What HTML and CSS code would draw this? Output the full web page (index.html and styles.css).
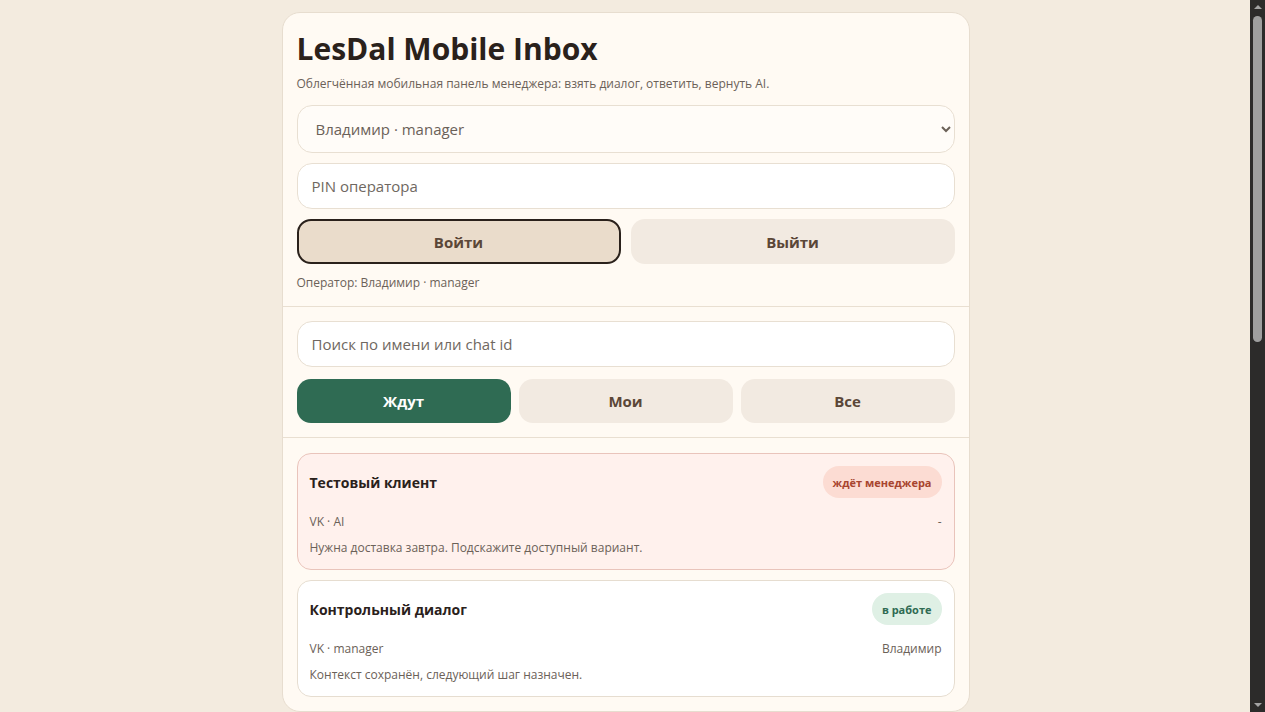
FILE: index.html
```html
<!DOCTYPE html>
<html lang="ru">
<head>
<meta charset="utf-8">
<title>LesDal Mobile Inbox</title>
<link rel="stylesheet" href="styles.css">
</head>
<body>
<main class="app">
  <section class="panel">
    <div class="section">
      <h1 class="title">LesDal Mobile Inbox</h1>
      <p class="subtitle">Облегчённая мобильная панель менеджера: взять диалог, ответить, вернуть AI.</p>
      <select class="field select">
        <option>Владимир · manager</option>
      </select>
      <input class="field" type="password" placeholder="PIN оператора">
      <div class="row2">
        <button class="btn btn-login">Войти</button>
        <button class="btn">Выйти</button>
      </div>
      <p class="hint">Оператор: Владимир · manager</p>
    </div>
    <div class="section">
      <input class="field" type="text" placeholder="Поиск по имени или chat id">
      <div class="row3">
        <button class="btn btn-active">Ждут</button>
        <button class="btn">Мои</button>
        <button class="btn">Все</button>
      </div>
    </div>
    <div class="section list">
      <article class="chat chat-wait">
        <div class="chat-head">
          <span class="chat-name">Тестовый клиент</span>
          <span class="badge badge-wait">ждёт менеджера</span>
        </div>
        <div class="chat-meta"><span>VK · AI</span><span>-</span></div>
        <div class="chat-text">Нужна доставка завтра. Подскажите доступный вариант.</div>
      </article>
      <article class="chat">
        <div class="chat-head">
          <span class="chat-name">Контрольный диалог</span>
          <span class="badge badge-work">в работе</span>
        </div>
        <div class="chat-meta"><span>VK · manager</span><span>Владимир</span></div>
        <div class="chat-text">Контекст сохранён, следующий шаг назначен.</div>
      </article>
    </div>
  </section>
  <section class="panel panel-dialog">
    <div class="section">
      <p class="hint">Выберите диалог из списка.</p>
    </div>
  </section>
</main>
<div class="scrollbar" aria-hidden="true">
  <span class="sb-arrow sb-up"></span>
  <span class="sb-track"><span class="sb-thumb"></span></span>
  <span class="sb-arrow sb-down"></span>
</div>
</body>
</html>
```
FILE: styles.css
```css
html {
  color-scheme: dark;
}

body {
  margin: 0;
  padding-right: 14px;
  background: #f3ebdf;
  color: #2a211b;
  font-family: "Open Sans", "Noto Sans", sans-serif;
}

/* imitation of the browser's vertical scrollbar */
.scrollbar {
  position: fixed;
  top: 0;
  right: 0;
  width: 15px;
  height: 100vh;
  background: #2c2b2a;
  display: flex;
  flex-direction: column;
  align-items: center;
}

.sb-arrow {
  width: 0;
  height: 0;
  flex: 0 0 auto;
}

.sb-up {
  margin-top: 5px;
  border-left: 4px solid transparent;
  border-right: 4px solid transparent;
  border-bottom: 4px solid #a3a3a3;
}

.sb-down {
  margin-bottom: 5px;
  border-left: 4px solid transparent;
  border-right: 4px solid transparent;
  border-top: 4px solid #a3a3a3;
}

.sb-track {
  flex: 1;
  width: 100%;
  display: flex;
  justify-content: center;
  padding-top: 7px;
}

.sb-thumb {
  width: 9px;
  height: 326px;
  border-radius: 5px;
  background: #9f9f9f;
}

.app {
  width: 688px;
  margin: 12px auto;
  display: flex;
  flex-direction: column;
  gap: 12px;
}

.panel {
  background: #fffaf3;
  border: 1px solid #e7ddcf;
  border-radius: 18px;
  overflow: hidden;
}

.section {
  padding: 14px;
  display: flex;
  flex-direction: column;
  gap: 10px;
}

.section + .section {
  border-top: 1px solid #e9dfd1;
}

.title {
  margin: 0;
  padding-top: 4px;
  font-size: 30px;
  line-height: 36px;
  font-weight: 700;
  color: #2a211b;
}

.subtitle {
  margin: -2px 0 3px;
  font-size: 12px;
  line-height: 17px;
  color: #6b6158;
}

.field {
  box-sizing: border-box;
  width: 100%;
  height: 46px;
  padding: 0 14px;
  border: 1px solid #e8dfd2;
  border-radius: 15px;
  background: #ffffff;
  color: #6b6158;
  font-family: inherit;
  font-size: 15px;
  outline: none;
}

.field::placeholder {
  color: #6f6861;
}

.select {
  height: 48px;
  background: #fffcf8;
  color: #6b6158;
}

.row2 {
  display: grid;
  grid-template-columns: 1fr 1fr;
  gap: 10px;
}

.row3 {
  display: grid;
  grid-template-columns: 1fr 1fr 1fr;
  gap: 8px;
  margin-top: 2px;
}

.btn {
  height: 45px;
  border: 2px solid transparent;
  border-radius: 14px;
  background: #f2eae1;
  color: #5b4738;
  font-family: inherit;
  font-size: 15px;
  font-weight: 700;
}

.row3 .btn {
  height: 44px;
}

.btn-login {
  background: #eadccb;
  border-color: #2a211b;
}

.btn-active {
  background: #2f6b53;
  color: #ffffff;
}

.hint {
  margin: 0;
  font-size: 12px;
  line-height: 18px;
  color: #6b6158;
}

.list {
  gap: 10px;
  padding-top: 15px;
}

.chat {
  padding: 12px;
  border: 1px solid #e6ddd0;
  border-radius: 14px;
  background: #ffffff;
}

.chat-wait {
  background: #fff1ed;
  border-color: #e9c4bb;
}

.chat-head {
  display: flex;
  align-items: center;
  justify-content: space-between;
  height: 32px;
}

.chat-name {
  font-size: 14px;
  font-weight: 700;
  color: #2a211b;
}

.badge {
  display: inline-flex;
  align-items: center;
  height: 32px;
  padding: 0 10px;
  border-radius: 16px;
  font-size: 11px;
  font-weight: 700;
}

.badge-wait {
  background: #fcdcd3;
  color: #a8452f;
}

.badge-work {
  background: #dff0e5;
  color: #2f6b53;
}

.chat-meta {
  display: flex;
  justify-content: space-between;
  margin-top: 15px;
  font-size: 12px;
  line-height: 18px;
  color: #6b6158;
}

.chat-text {
  margin-top: 8px;
  font-size: 12px;
  line-height: 18px;
  color: #6b6158;
}

.panel-dialog {
  min-height: 756px;
}
```
